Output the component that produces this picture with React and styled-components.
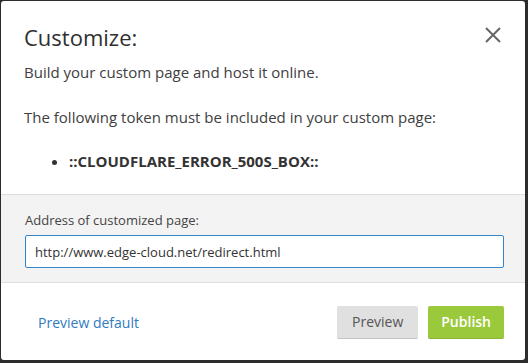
import React from "react";
import styled, { createGlobalStyle } from "styled-components";

const Global = createGlobalStyle`
  html, body { margin: 0; padding: 0; background: #2c2c2c; }
  body { font-family: "Open Sans", "Liberation Sans", sans-serif; }
  * { box-sizing: border-box; }
`;

const Page = styled.div`
  width: 528px;
  height: 363px;
  padding: 1px 3px 3px 1px;
  background: #2c2c2c;
`;

const Modal = styled.div`
  width: 524px;
  height: 359px;
  background: #fff;
  border-radius: 3px;
  display: flex;
  flex-direction: column;
  overflow: hidden;
`;

const Body = styled.div`
  position: relative;
  padding: 21px 24px 0 23px;
  height: 194px;
  border-bottom: 1px solid #dedede;
`;

const Title = styled.h2`
  margin: 0;
  font-size: 22px;
  line-height: 30px;
  font-weight: 400;
  color: #303030;
`;

const Close = styled.button`
  position: absolute;
  top: 26px;
  right: 24px;
  width: 16px;
  height: 16px;
  padding: 0;
  border: 0;
  background: none;
  cursor: pointer;
`;

const Text = styled.p`
  margin: ${(p) => p.$mt || 0}px 0 0;
  font-size: 15px;
  line-height: 22px;
  color: #404040;
`;

const List = styled.ul`
  margin: 22px 0 0;
  padding-left: 45px;
  font-size: 15px;
  line-height: 22px;
  color: #333;
`;

const Item = styled.li`
  font-weight: 700;
`;

const Field = styled.div`
  background: #f3f3f3;
  padding: 16px 24px 0 24px;
  height: 88px;
  border-bottom: 1px solid #dedede;
`;

const Label = styled.label`
  display: block;
  font-size: 13px;
  line-height: 18px;
  color: #444;
  margin-bottom: 6px;
`;

const Input = styled.input`
  display: block;
  width: 479px;
  height: 33px;
  border: 1px solid #3584c9;
  border-radius: 2px;
  padding: 0 9px;
  font-family: "Open Sans", "Liberation Sans", sans-serif;
  font-size: 13px;
  color: #333;
  background: #fff;
  outline: none;
`;

const Footer = styled.div`
  flex: 1;
  display: flex;
  align-items: center;
  padding: 1px 21px 0 37px;
`;

const Link = styled.a`
  font-size: 14px;
  color: #2f7bbf;
  text-decoration: none;
  margin-right: auto;
`;

const Button = styled.button`
  height: 33px;
  padding: 0 ${(p) => p.$px}px;
  margin-left: ${(p) => p.$ml || 0}px;
  border: 0;
  border-radius: 2px;
  font-family: "Open Sans", "Liberation Sans", sans-serif;
  font-size: 14px;
  font-weight: ${(p) => (p.$primary ? 600 : 400)};
  color: ${(p) => (p.$primary ? "#fff" : "#555")};
  background: ${(p) => (p.$primary ? "#9bc93c" : "#e0e0e0")};
  border-bottom: 1px solid ${(p) => (p.$primary ? "#8ab534" : "#c4c4c4")};
  cursor: pointer;
`;

export default function App() {
  return (
    <Page>
      <Global />
      <Modal>
        <Body>
          <Title>Customize:</Title>
          <Close aria-label="Close">
            <svg width="16" height="16" viewBox="0 0 16 16">
              <path d="M1 1 L15 15 M15 1 L1 15" stroke="#666" strokeWidth="2" />
            </svg>
          </Close>
          <Text $mt={9}>Build your custom page and host it online.</Text>
          <Text $mt={23}>The following token must be included in your custom page:</Text>
          <List>
            <Item>::CLOUDFLARE_ERROR_500S_BOX::</Item>
          </List>
        </Body>
        <Field>
          <Label>Address of customized page:</Label>
          <Input defaultValue="http://www.edge-cloud.net/redirect.html" />
        </Field>
        <Footer>
          <Link href="#">Preview default</Link>
          <Button $px={15}>Preview</Button>
          <Button $px={13} $ml={10} $primary>Publish</Button>
        </Footer>
      </Modal>
    </Page>
  );
}
